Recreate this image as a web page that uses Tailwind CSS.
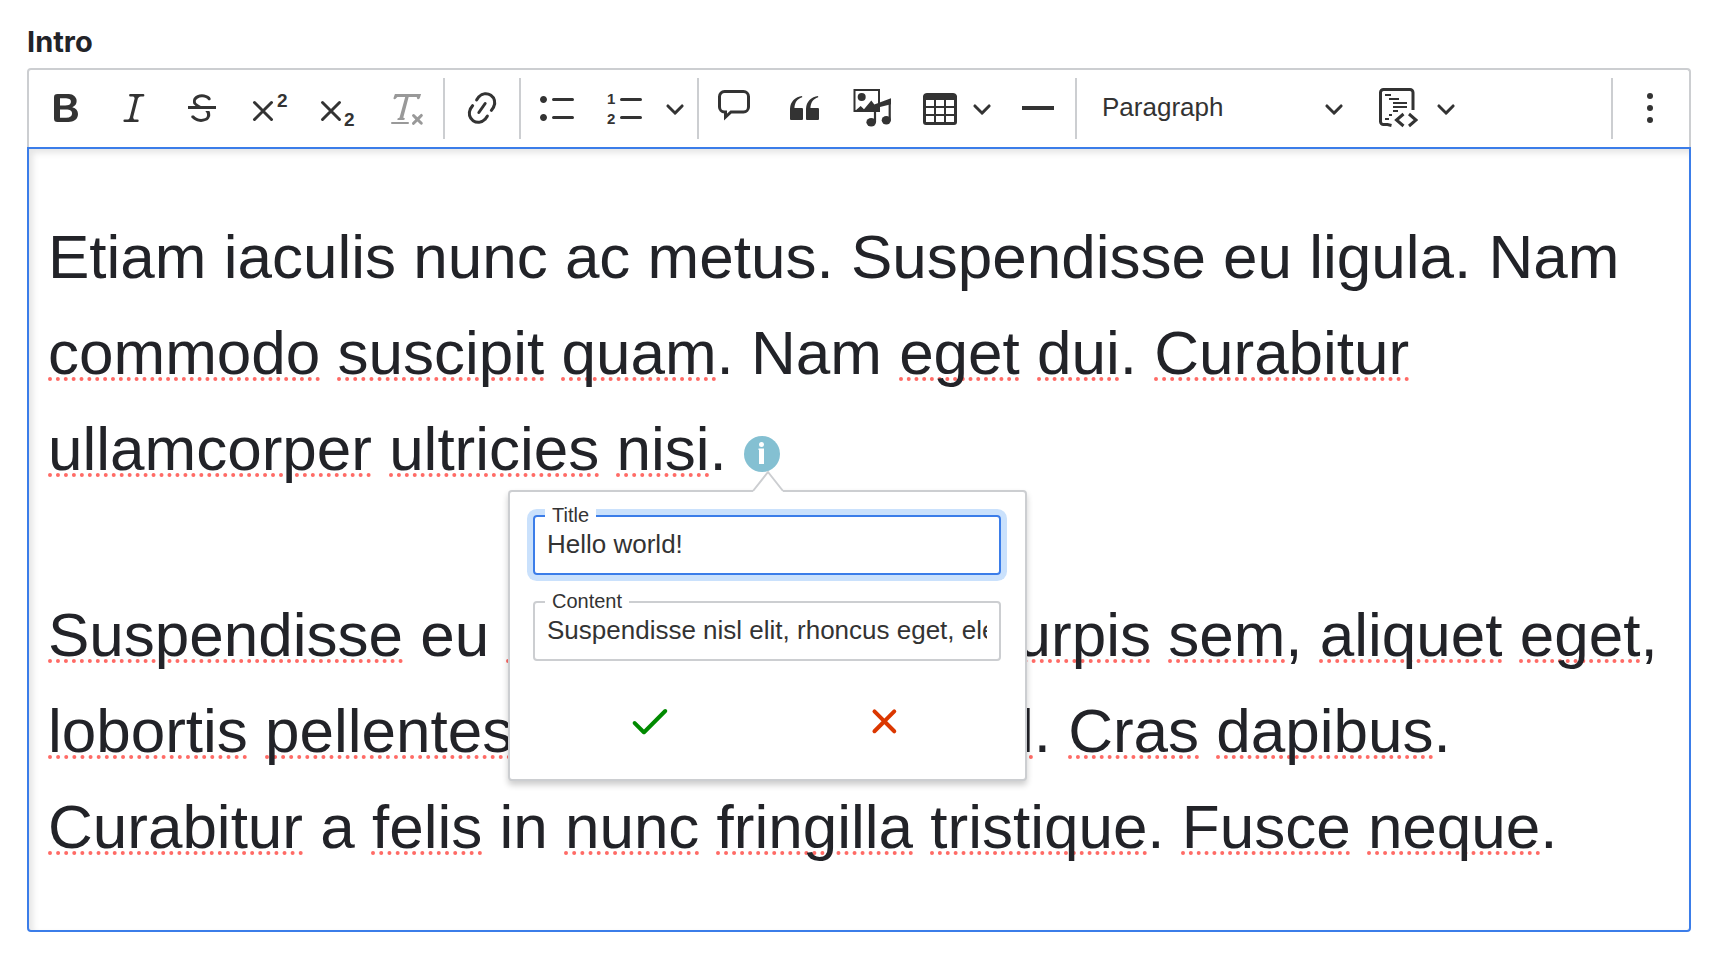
<!DOCTYPE html>
<html lang="en">
<head>
  <meta charset="UTF-8" />
  <meta name="viewport" content="width=device-width, initial-scale=1.0" />
  <title>Intro</title>
  <script src="https://cdn.jsdelivr.net/npm/@tailwindcss/browser@4"></script>
</head>
<body class="bg-white font-['Liberation_Sans',Arial,sans-serif] text-[#333333]">
  <main class="pl-[27px] pr-[29px] pt-[22px]">
    <h1 id="field-label" class="font-['Inter',sans-serif] text-[29px] leading-[40px] font-bold text-[#222328] mb-[6px]">Intro</h1>

    <!-- Toolbar -->
    <div role="toolbar" aria-label="Editor toolbar" class="flex items-stretch gap-1 border-2 border-b-0 border-[#ccced1] rounded-t py-2 pl-[5px] pr-[7px]">
      <button type="button" aria-label="Bold" class="flex items-center justify-center w-16 h-[61px] pb-px">
        <svg class="size-10" viewBox="0 0 20 20" fill="currentColor"><path d="M10.187 17H5.773c-.637 0-1.092-.138-1.364-.415-.273-.277-.409-.718-.409-1.323V4.738c0-.617.14-1.062.419-1.332.279-.27.73-.406 1.354-.406h4.68c.69 0 1.288.041 1.793.124.506.083.96.242 1.36.478.341.197.644.447.906.75a3.262 3.262 0 0 1 .808 2.162c0 1.401-.722 2.426-2.167 3.075C15.05 10.175 16 11.315 16 13.01a3.756 3.756 0 0 1-2.296 3.504 6.1 6.1 0 0 1-1.517.377c-.571.073-1.238.11-2 .11zm-.217-6.217H7v4.087h3.069c1.977 0 2.965-.69 2.965-2.072 0-.707-.256-1.22-.768-1.537-.512-.319-1.277-.478-2.296-.478zM7 5.13v3.619h2.606c.729 0 1.292-.067 1.69-.2a1.6 1.6 0 0 0 .91-.765c.165-.267.247-.566.247-.897 0-.707-.26-1.176-.778-1.409-.519-.232-1.31-.348-2.375-.348H7z"/></svg>
      </button>
      <button type="button" aria-label="Italic" class="flex items-center justify-center w-16 pb-px">
        <svg class="size-10" viewBox="0 0 20 20" fill="currentColor"><path d="m9.586 14.633.021.004c-.036.335.095.655.393.962.082.083.173.15.274.201h1.474a.6.6 0 1 1 0 1.2H5.304a.6.6 0 0 1 0-1.2h1.15c.474-.07.809-.182 1.005-.334.157-.122.291-.32.404-.597l2.416-9.55a1.053 1.053 0 0 0-.281-.823 1.12 1.12 0 0 0-.442-.296H8.15a.6.6 0 0 1 0-1.2h6.443a.6.6 0 1 1 0 1.2h-1.195c-.376.056-.65.155-.823.296-.215.175-.423.439-.623.79l-2.366 9.347z"/></svg>
      </button>
      <button type="button" aria-label="Strikethrough" class="flex items-center justify-center w-16 pb-px">
        <svg class="size-10" viewBox="0 0 20 20" fill="currentColor"><path d="M7 16.4c-.8-.4-1.5-.9-2.2-1.5a.6.6 0 0 1-.2-.5l.3-.6h1c1 1.2 2.1 1.7 3.7 1.7 1 0 1.8-.3 2.3-.6.6-.4.6-1.2.6-1.3.2-1.2-.9-2.1-.9-2.1h2.1c.3.7.4 1.2.4 1.7v.8l-.6 1.2c-.6.8-1.1 1-1.6 1.2a6 6 0 0 1-2.4.6c-1 0-1.8-.3-2.5-.6zM6.8 9 6 8.3c-.4-.5-.5-.8-.5-1.6 0-.7.1-1.3.5-1.8.4-.6 1-1 1.6-1.3a6.3 6.3 0 0 1 4.7 0 4 4 0 0 1 1.7 1l.3.7c0 .1.2.4-.2.7-.4.2-.9.1-1 0a3 3 0 0 0-1.2-1c-.4-.2-1-.3-2-.4-.7 0-1.4.2-2 .6-.8.6-1 .8-1 1.5 0 .8.5 1 1.2 1.5.6.4 1.1.7 1.9 1H6.8z"/><path d="M3 10.5V9h14v1.5z"/></svg>
      </button>
      <button type="button" aria-label="Superscript" class="flex items-center justify-center w-16 pb-px">
        <svg class="size-10 overflow-visible" viewBox="0 0 40 40" fill="none" stroke="currentColor" stroke-width="3" stroke-linecap="round"><path d="M4.500 14.500l17 17M21.500 14.500l-17 17"/><text x="27" y="19" fill="currentColor" stroke="none" class="text-[19px] font-bold">2</text></svg>
      </button>
      <button type="button" aria-label="Subscript" class="flex items-center justify-center w-16 pb-px">
        <svg class="size-10 overflow-visible" viewBox="0 0 40 40" fill="none" stroke="currentColor" stroke-width="3" stroke-linecap="round"><path d="M4.500 14.500l17 17M21.500 14.500l-17 17"/><text x="26" y="38" fill="currentColor" stroke="none" class="text-[19px] font-bold">2</text></svg>
      </button>
      <button type="button" aria-label="Remove Format" disabled class="flex items-center justify-center w-16 pb-px text-[#999999]">
        <svg class="size-10" viewBox="0 0 20 20" fill="currentColor"><path d="M8.69 14.915c.053.052.173.083.36.093a.366.366 0 0 1 .345.485l-.003.01a.738.738 0 0 1-.697.497h-2.67a.374.374 0 0 1-.353-.496l.013-.038a.681.681 0 0 1 .644-.458c.197-.012.325-.043.386-.093a.28.28 0 0 0 .072-.11L9.592 4.5H6.269c-.359-.017-.609.013-.75.09-.142.078-.289.265-.442.563-.192.29-.516.464-.864.464H4.17a.43.43 0 0 1-.407-.569L4.46 3h13.08l-.62 2.043a.81.81 0 0 1-.775.574h-.114a.486.486 0 0 1-.486-.486c.001-.284-.054-.464-.167-.54-.112-.076-.367-.106-.766-.091h-3.28l-2.68 10.257c-.006.074.007.127.038.158zM3 17h8a.5.5 0 1 1 0 1H3a.5.5 0 1 1 0-1zm11.299 1.17a.75.75 0 1 1-1.06-1.06l1.414-1.415-1.415-1.414a.75.75 0 0 1 1.06-1.06l1.415 1.414 1.414-1.415a.75.75 0 1 1 1.06 1.06l-1.413 1.415 1.414 1.415a.75.75 0 0 1-1.06 1.06l-1.415-1.414-1.414 1.414z"/></svg>
      </button>
      <span class="w-0.5 mx-px bg-[#ccced1]"></span>
      <button type="button" aria-label="Link" class="flex items-center justify-center w-16 pb-px">
        <svg class="size-10" viewBox="0 0 20 20" fill="currentColor"><path d="m11.077 15 .991-1.416a.75.75 0 1 1 1.229.86l-1.148 1.64a.748.748 0 0 1-.217.206 5.251 5.251 0 0 1-8.503-5.955.741.741 0 0 1 .12-.274l1.147-1.639a.75.75 0 1 1 1.228.86L4.933 10.7l.006.003a3.75 3.75 0 0 0 6.132 4.294l.006.004zm5.494-5.335a.748.748 0 0 1-.12.274l-1.147 1.639a.75.75 0 1 1-1.228-.86l.86-1.23a3.75 3.75 0 0 0-6.144-4.301l-.86 1.229a.75.75 0 0 1-1.229-.86l1.148-1.64a.748.748 0 0 1 .217-.206 5.251 5.251 0 0 1 8.503 5.955zm-4.563-2.532a.75.75 0 0 1 .184 1.045l-3.155 4.505a.75.75 0 1 1-1.229-.86l3.155-4.506a.75.75 0 0 1 1.045-.184z"/></svg>
      </button>
      <span class="w-0.5 mx-px bg-[#ccced1]"></span>
      <button type="button" aria-label="Bulleted List" class="flex items-center justify-center w-16 pb-px">
        <svg class="size-10" viewBox="0 0 20 20" fill="currentColor"><path d="M7 5.750c0 .414.336.75.75.75h9.500a.75.75 0 1 0 0-1.500h-9.500a.75.75 0 0 0-.75.75zm-6 0C1 4.784 1.777 4 2.750 4c.966 0 1.750.777 1.750 1.750 0 .966-.777 1.750-1.750 1.750C1.784 7.500 1 6.723 1 5.750zm6 9c0 .414.336.75.75.75h9.500a.75.75 0 1 0 0-1.500h-9.500a.75.75 0 0 0-.75.75zm-6 0c0-.966.777-1.750 1.750-1.750.966 0 1.750.777 1.750 1.750 0 .966-.777 1.750-1.750 1.750-.966 0-1.750-.777-1.750-1.750z"/></svg>
      </button>
      <div class="flex">
        <button type="button" aria-label="Numbered List" class="flex items-center justify-center w-16 pb-px">
          <svg class="size-10" viewBox="0 0 40 40" fill="currentColor"><path d="M15.500 11.500h19M15.500 29.500h19" stroke="currentColor" stroke-width="3" stroke-linecap="round"/><text x="1" y="16" class="text-[15px] font-bold">1</text><text x="1" y="36" class="text-[15px] font-bold">2</text></svg>
        </button>
        <button type="button" aria-label="List properties" class="flex items-center justify-center w-[34px] pb-px">
          <svg class="size-5" viewBox="0 0 10 10" fill="currentColor"><path d="M.941 4.523a.75.75 0 1 1 1.060-1.060l3.006 3.005 3.005-3.005a.75.75 0 1 1 1.060 1.060l-3.549 3.550a.75.75 0 0 1-1.168-.136L.941 4.523z"/></svg>
        </button>
      </div>
      <span class="w-0.5 mx-px bg-[#ccced1]"></span>
      <button type="button" aria-label="Comment" class="flex items-center justify-center w-16 pb-px">
        <svg class="size-10" viewBox="0 0 40 40" fill="none" stroke="currentColor" stroke-width="3"><path d="M8.500 3.500h19a5 5 0 0 1 5 5v10.500a5 5 0 0 1-5 5H15l-5.500 5v-5h-1a5 5 0 0 1-5-5V8.500a5 5 0 0 1 5-5z"/></svg>
      </button>
      <button type="button" aria-label="Block quote" class="flex items-center justify-center w-16 pb-px">
        <svg class="size-10" viewBox="0 0 20 20" fill="currentColor"><path d="M3 10.423a6.500 6.500 0 0 1 6.056-6.408l.038.67C6.448 5.423 5.354 7.663 5.220 10H9c.552 0 .5.432.5.986v4.511c0 .554-.448.503-1 .503h-5c-.552 0-.5-.449-.5-1.003v-4.574zm8 0a6.500 6.500 0 0 1 6.056-6.408l.038.67c-2.646.739-3.740 2.979-3.873 5.315H17c.552 0 .5.432.5.986v4.511c0 .554-.448.503-1 .503h-5c-.552 0-.5-.449-.5-1.003v-4.574z"/></svg>
      </button>
      <button type="button" aria-label="Insert media" class="flex items-center justify-center w-16 pb-px">
        <svg class="size-10" viewBox="0 0 40 40" fill="currentColor"><path d="M2.500 2h24.500v21H2.500z" fill="none" stroke="currentColor" stroke-width="2"/><circle cx="9.700" cy="9" r="4"/><path d="M3 23l5.700-5 3.300 3.300L19.300 12.500l3 4L39 10.300v6L28 19v5H3z"/><path d="M23 18v16M37.700 12v20" stroke="currentColor" stroke-width="2.200"/><ellipse cx="19.200" cy="34.300" rx="4.800" ry="4.200"/><ellipse cx="34.300" cy="32.300" rx="4.600" ry="4.200"/></svg>
      </button>
      <button type="button" aria-label="Insert table" class="flex items-center gap-3 pl-3 pr-2.5 pb-px">
        <svg class="size-10" viewBox="0 0 20 20" fill="currentColor"><path d="M3 6v3h4V6H3zm0 4v3h4v-3H3zm0 4v3h4v-3H3zm5 3h4v-3H8v3zm5 0h4v-3h-4v3zm4-4v-3h-4v3h4zm0-4V6h-4v3h4zm1.500 8a1.500 1.500 0 0 1-1.500 1.500H3A1.500 1.500 0 0 1 1.500 17V4c.222-.863 1.068-1.500 2-1.500h13c.932 0 1.778.637 2 1.500v13zM12 13v-3H8v3h4zm0-4V6H8v3h4z"/></svg>
        <svg class="size-5" viewBox="0 0 10 10" fill="currentColor"><path d="M.941 4.523a.75.75 0 1 1 1.060-1.060l3.006 3.005 3.005-3.005a.75.75 0 1 1 1.060 1.060l-3.549 3.550a.75.75 0 0 1-1.168-.136L.941 4.523z"/></svg>
      </button>
      <button type="button" aria-label="Horizontal line" class="flex items-center justify-center w-16 pb-px">
        <svg class="size-10" viewBox="0 0 20 20" fill="currentColor"><path d="M2 9h16v2H2z"/></svg>
      </button>
      <span class="w-0.5 mx-px bg-[#ccced1]"></span>
      <div class="grid items-center w-[280px] pb-px">
        <select aria-label="Heading" class="col-start-1 row-start-1 appearance-none w-full h-full pl-5 pb-px text-[26px] bg-transparent outline-none">
          <option>Paragraph</option>
          <option>Heading 1</option>
          <option>Heading 2</option>
        </select>
        <svg class="col-start-1 row-start-1 justify-self-end mr-[18px] size-5 pointer-events-none" viewBox="0 0 10 10" fill="currentColor"><path d="M.941 4.523a.75.75 0 1 1 1.060-1.060l3.006 3.005 3.005-3.005a.75.75 0 1 1 1.060 1.060l-3.549 3.550a.75.75 0 0 1-1.168-.136L.941 4.523z"/></svg>
      </div>
      <button type="button" aria-label="Insert code" class="flex items-center gap-[18px] pl-3 pr-2.5 pb-px">
        <svg class="size-10" viewBox="0 0 40 40" fill="none" stroke="currentColor" stroke-width="3"><path d="M35 22V4.500a3 3 0 0 0-3-3H5.500a3 3 0 0 0-3 3v29a3 3 0 0 0 3 3H9.500l4 1"/><path stroke-width="2" d="M7 7h6M11 11h10M15 15h14M15 19h14M15 23h5M11 27h3M7 31h4"/><path d="M25.500 26l-7 6 7 6M31 26l7 6-7 6"/></svg>
        <svg class="size-5" viewBox="0 0 10 10" fill="currentColor"><path d="M.941 4.523a.75.75 0 1 1 1.060-1.060l3.006 3.005 3.005-3.005a.75.75 0 1 1 1.060 1.060l-3.549 3.550a.75.75 0 0 1-1.168-.136L.941 4.523z"/></svg>
      </button>
      <span class="w-0.5 ml-auto mr-px bg-[#ccced1]"></span>
      <button type="button" aria-label="Show more items" class="flex items-center justify-center w-16 pb-px">
        <svg class="size-10" viewBox="0 0 40 40" fill="currentColor"><circle cx="20" cy="8" r="3"/><circle cx="20" cy="20" r="3"/><circle cx="20" cy="32" r="3"/></svg>
      </button>
    </div>

    <!-- Editable area -->
    <div class="relative border-2 border-[#3b7de9] rounded-b shadow-[inset_4px_4px_6px_rgba(0,0,0,0.1)]">
      <div role="textbox" aria-multiline="true" aria-labelledby="field-label" class="flex flex-col gap-[90px] px-[19px] pt-[60px] pb-[55px] text-[62px] leading-[96px] text-[#222328]">
        <p>Etiam iaculis nunc ac metus. Suspendisse eu ligula. Nam<br />
          <u class="decoration-dotted decoration-4 decoration-[#ff6b66] underline-offset-3 [text-decoration-skip-ink:none]">commodo</u> <u class="decoration-dotted decoration-4 decoration-[#ff6b66] underline-offset-3 [text-decoration-skip-ink:none]">suscipit</u> <u class="decoration-dotted decoration-4 decoration-[#ff6b66] underline-offset-3 [text-decoration-skip-ink:none]">quam</u>. Nam <u class="decoration-dotted decoration-4 decoration-[#ff6b66] underline-offset-3 [text-decoration-skip-ink:none]">eget</u> <u class="decoration-dotted decoration-4 decoration-[#ff6b66] underline-offset-3 [text-decoration-skip-ink:none]">dui</u>. <u class="decoration-dotted decoration-4 decoration-[#ff6b66] underline-offset-3 [text-decoration-skip-ink:none]">Curabitur</u><br />
          <u class="decoration-dotted decoration-4 decoration-[#ff6b66] underline-offset-3 [text-decoration-skip-ink:none]">ullamcorper</u> <u class="decoration-dotted decoration-4 decoration-[#ff6b66] underline-offset-3 [text-decoration-skip-ink:none]">ultricies</u> <u class="decoration-dotted decoration-4 decoration-[#ff6b66] underline-offset-3 [text-decoration-skip-ink:none]">nisi</u>. <svg class="inline-block size-9 align-[-2px]" viewBox="0 0 36 36" role="img" aria-label="Info"><circle cx="18" cy="18" r="18" fill="#84c0d2"/><circle cx="17.500" cy="8.500" r="2.500" fill="#fff"/><path d="M14.500 12.500H20V28h-5V14h-.5z" fill="#fff"/></svg></p>
        <p><u class="decoration-dotted decoration-4 decoration-[#ff6b66] underline-offset-3 [text-decoration-skip-ink:none]">Suspendisse</u> eu <u class="decoration-dotted decoration-4 decoration-[#ff6b66] underline-offset-3 [text-decoration-skip-ink:none]">ligula</u>. Donec nec <u class="decoration-dotted decoration-4 decoration-[#ff6b66] underline-offset-3 [text-decoration-skip-ink:none]">turpis</u> <u class="decoration-dotted decoration-4 decoration-[#ff6b66] underline-offset-3 [text-decoration-skip-ink:none]">sem</u>, <u class="decoration-dotted decoration-4 decoration-[#ff6b66] underline-offset-3 [text-decoration-skip-ink:none]">aliquet</u> <u class="decoration-dotted decoration-4 decoration-[#ff6b66] underline-offset-3 [text-decoration-skip-ink:none]">eget</u>,<br />
          <u class="decoration-dotted decoration-4 decoration-[#ff6b66] underline-offset-3 [text-decoration-skip-ink:none]">lobortis</u> <u class="decoration-dotted decoration-4 decoration-[#ff6b66] underline-offset-3 [text-decoration-skip-ink:none]">pellentesque</u>, <u class="decoration-dotted decoration-4 decoration-[#ff6b66] underline-offset-3 [text-decoration-skip-ink:none]">commodo</u> <u class="decoration-dotted decoration-4 decoration-[#ff6b66] underline-offset-3 [text-decoration-skip-ink:none]">nisl</u>. <u class="decoration-dotted decoration-4 decoration-[#ff6b66] underline-offset-3 [text-decoration-skip-ink:none]">Cras</u> <u class="decoration-dotted decoration-4 decoration-[#ff6b66] underline-offset-3 [text-decoration-skip-ink:none]">dapibus</u>.<br />
          <u class="decoration-dotted decoration-4 decoration-[#ff6b66] underline-offset-3 [text-decoration-skip-ink:none]">Curabitur</u> a <u class="decoration-dotted decoration-4 decoration-[#ff6b66] underline-offset-3 [text-decoration-skip-ink:none]">felis</u> in <u class="decoration-dotted decoration-4 decoration-[#ff6b66] underline-offset-3 [text-decoration-skip-ink:none]">nunc</u> <u class="decoration-dotted decoration-4 decoration-[#ff6b66] underline-offset-3 [text-decoration-skip-ink:none]">fringilla</u> <u class="decoration-dotted decoration-4 decoration-[#ff6b66] underline-offset-3 [text-decoration-skip-ink:none]">tristique</u>. <u class="decoration-dotted decoration-4 decoration-[#ff6b66] underline-offset-3 [text-decoration-skip-ink:none]">Fusce</u> <u class="decoration-dotted decoration-4 decoration-[#ff6b66] underline-offset-3 [text-decoration-skip-ink:none]">neque</u>.</p>
      </div>

      <!-- Tooltip balloon -->
      <form class="absolute left-[479px] top-[341px] w-[519px] pl-[23px] pr-6 pt-[23px] pb-[23px] bg-white border-2 border-[#ccced1] rounded shadow-[0_4px_6px_rgba(0,0,0,0.2)]">
        <svg class="absolute -top-[22px] left-1/2 -translate-x-1/2 w-8 h-[22px]" viewBox="0 0 32 22"><path d="M1 21L16 2l15 19v1H1z" fill="#fff"/><path d="M1 21L16 2l15 19" fill="none" stroke="#ccced1" stroke-width="2"/></svg>
        <div class="relative">
          <input id="tip-title" type="text" value="Hello world!" class="block w-full h-[60px] px-3 pb-0.5 text-[26px] border-2 border-[#3b7de9] rounded outline-none ring-6 ring-[#cae1fc]" />
          <label for="tip-title" class="absolute left-3 -top-3 px-[7px] bg-white text-[20px] leading-[24px]">Title</label>
        </div>
        <div class="relative mt-[26px]">
          <input id="tip-content" type="text" value="Suspendisse nisl elit, rhoncus eget, elementum ac, condimentum eget, diam." class="block w-full h-[60px] px-3 pb-0.5 text-[26px] border-2 border-[#ccced1] rounded outline-none" />
          <label for="tip-content" class="absolute left-3 -top-3 px-[7px] bg-white text-[20px] leading-[24px]">Content</label>
        </div>
        <div class="flex mt-[25px]">
          <button type="submit" aria-label="Save" class="flex flex-1 items-center justify-center h-[70px] text-[#008a00]">
            <svg class="size-10" viewBox="0 0 20 20" fill="currentColor"><path d="M6.972 16.615a.997.997 0 0 1-.744-.292l-4.596-4.596a1 1 0 1 1 1.414-1.414l3.926 3.926 9.937-9.937a1 1 0 0 1 1.414 1.415L7.717 16.323a.997.997 0 0 1-.745.292z"/></svg>
          </button>
          <button type="button" aria-label="Cancel" class="flex flex-1 items-center justify-center h-[70px] text-[#db3700]">
            <svg class="size-10" viewBox="0 0 20 20" fill="currentColor"><path d="m11.591 10.177 4.243 4.242a1 1 0 0 1-1.415 1.415l-4.242-4.243-4.243 4.243a1 1 0 0 1-1.414-1.415l4.243-4.242L4.520 5.934A1 1 0 0 1 5.934 4.520l4.243 4.243 4.242-4.243a1 1 0 1 1 1.415 1.414l-4.243 4.243z"/></svg>
          </button>
        </div>
      </form>
    </div>
  </main>
</body>
</html>
